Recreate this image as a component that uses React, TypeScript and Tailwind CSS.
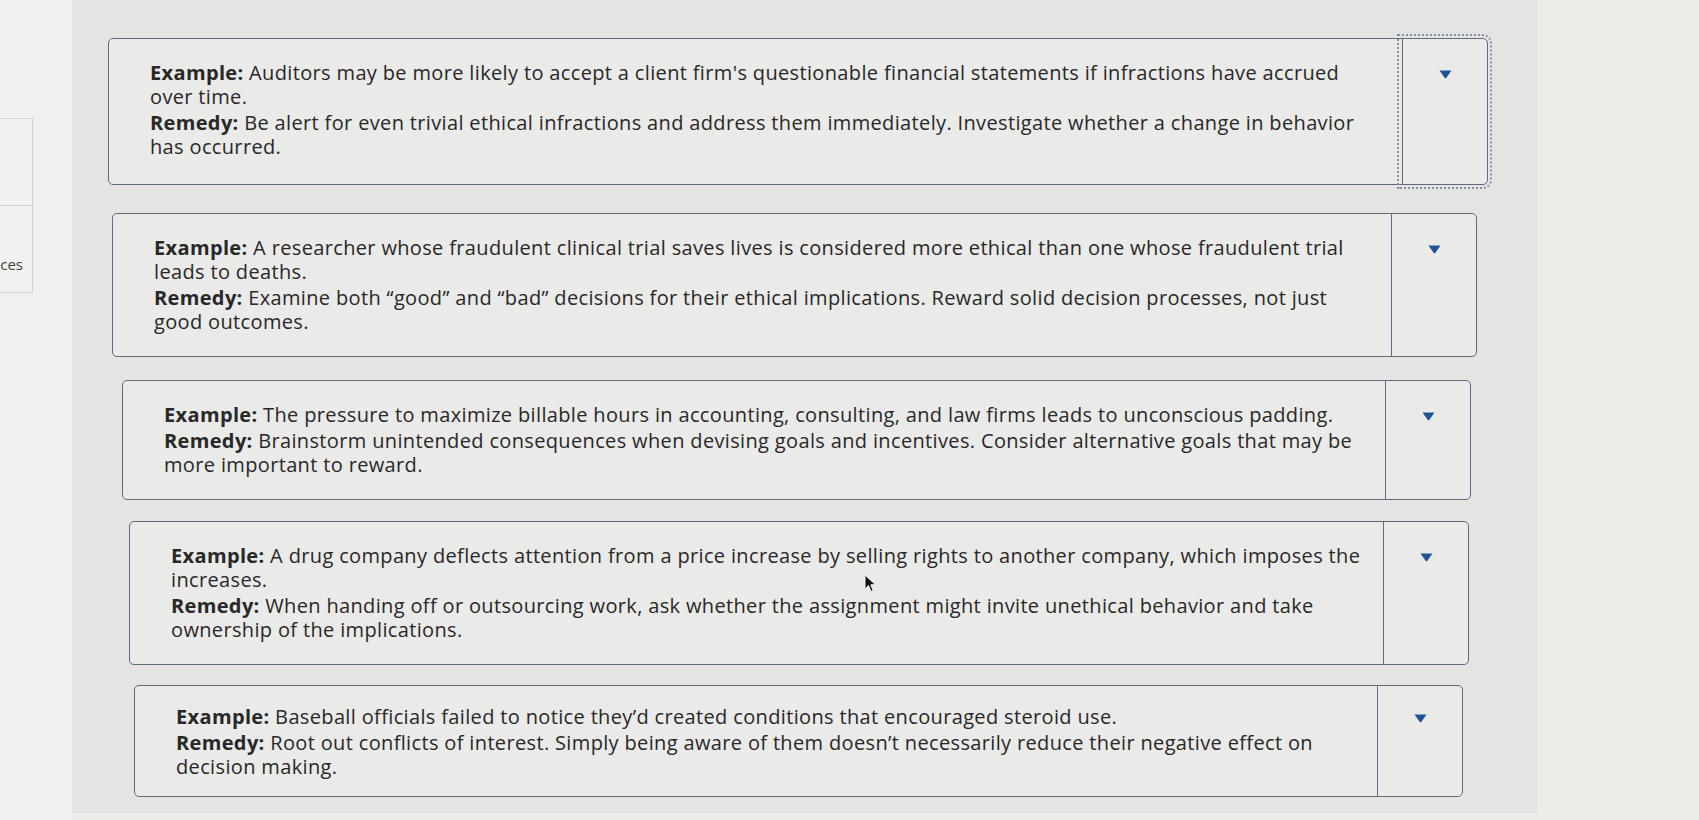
import React from "react";

type Item = {
  example: React.ReactNode[];
  remedy: React.ReactNode[];
  box: string;
  pad: string;
};

const B = ({ children }: { children: React.ReactNode }) => (
  <span className="font-bold">{children}</span>
);

const items: Item[] = [
  {
    box: "mt-[38px] ml-[36px] w-[1380px]",
    pad: "pt-[22px] pb-[25px]",
    example: [
      <>
        <B>Example:</B> Auditors may be more likely to accept a client firm's questionable financial statements if infractions have accrued
      </>,
      <>over time.</>,
    ],
    remedy: [
      <>
        <B>Remedy:</B> Be alert for even trivial ethical infractions and address them immediately. Investigate whether a change in behavior
      </>,
      <>has occurred.</>,
    ],
  },
  {
    box: "mt-[28px] ml-[40px] w-[1365px]",
    pad: "pt-[22px] pb-[22px]",
    example: [
      <>
        <B>Example:</B> A researcher whose fraudulent clinical trial saves lives is considered more ethical than one whose fraudulent trial
      </>,
      <>leads to deaths.</>,
    ],
    remedy: [
      <>
        <B>Remedy:</B> Examine both “good” and “bad” decisions for their ethical implications. Reward solid decision processes, not just
      </>,
      <>good outcomes.</>,
    ],
  },
  {
    box: "mt-[23px] ml-[50px] w-[1349px]",
    pad: "pt-[22px] pb-[22px]",
    example: [
      <>
        <B>Example:</B> The pressure to maximize billable hours in accounting, consulting, and law firms leads to unconscious padding.
      </>,
    ],
    remedy: [
      <>
        <B>Remedy:</B> Brainstorm unintended consequences when devising goals and incentives. Consider alternative goals that may be
      </>,
      <>more important to reward.</>,
    ],
  },
  {
    box: "mt-[21px] ml-[57px] w-[1340px]",
    pad: "pt-[22px] pb-[22px]",
    example: [
      <>
        <B>Example:</B> A drug company deflects attention from a price increase by selling rights to another company, which imposes the
      </>,
      <>increases.</>,
    ],
    remedy: [
      <>
        <B>Remedy:</B> When handing off or outsourcing work, ask whether the assignment might invite unethical behavior and take
      </>,
      <>ownership of the implications.</>,
    ],
  },
  {
    box: "mt-[20px] ml-[62px] w-[1329px]",
    pad: "pt-[19px] pb-[17px]",
    example: [
      <>
        <B>Example:</B> Baseball officials failed to notice they’d created conditions that encouraged steroid use.
      </>,
    ],
    remedy: [
      <>
        <B>Remedy:</B> Root out conflicts of interest. Simply being aware of them doesn’t necessarily reduce their negative effect on
      </>,
      <>decision making.</>,
    ],
  },
];

const Caret = () => (
  <svg width="13" height="9" viewBox="0 0 13 9" aria-hidden="true">
    <path d="M0.5 0.5 H12.5 L7.4 7.8 Q6.5 8.8 5.6 7.8 Z" fill="#1f5393" />
  </svg>
);

export default function App() {
  return (
    <div className="relative flex h-[820px] w-[1699px] overflow-hidden bg-[#ecece9] font-['Open_Sans',sans-serif] text-[#282828]">
      <aside className="w-[72px] shrink-0 bg-[#f0f0ee] pt-[118px]">
        <div className="w-[33px] border border-l-0 border-[#d3d3d1] bg-[#f1f1ef]">
          <div className="h-[87px] border-b border-[#d3d3d1]" />
          <div className="flex h-[86px] items-start justify-end overflow-hidden pt-[48px] pr-[9px] text-[15px] leading-[20px] text-[#3f3f3f]">
            ces
          </div>
        </div>
      </aside>

      <main className="flex h-[813px] w-[1466px] shrink-0 flex-col bg-[#e4e4e2]">
        {items.map((it, i) => (
          <div
            key={i}
            className={`${it.box} flex rounded-[5px] border-[1.5px] border-[#5f6a7d] bg-[#eaeae8]`}
          >
            <div
              className={`${it.pad} flex flex-1 flex-col gap-[2px] pl-[41px] text-[20px] leading-[24px] tracking-[0.35px] whitespace-nowrap`}
            >
              <div>
                {it.example.map((l, j) => (
                  <div key={j}>{l}</div>
                ))}
              </div>
              <div>
                {it.remedy.map((l, j) => (
                  <div key={j}>{l}</div>
                ))}
              </div>
            </div>
            <div
              className={
                i === 0
                  ? "flex w-[85px] shrink-0 justify-center rounded-r-[4px] border-l-[1.5px] border-[#5f6a7d] pt-[31px] outline-2 outline-offset-[3px] outline-dotted outline-[#8590a3]"
                  : i === 4
                  ? "flex w-[85px] shrink-0 justify-center border-l-[1.5px] border-[#5f6a7d] pt-[28px]"
                  : "flex w-[85px] shrink-0 justify-center border-l-[1.5px] border-[#5f6a7d] pt-[31px]"
              }
            >
              <div>
                <Caret />
              </div>
            </div>
          </div>
        ))}
      </main>

      <div className="flex-1 bg-[#ecece9]" />

      <svg
        className="absolute left-[864px] top-[574px]"
        width="13"
        height="19"
        viewBox="0 0 13 19"
        aria-hidden="true"
      >
        <path
          d="M1 1 L1 15 L4.5 11.5 L7 17.5 L9.2 16.6 L6.8 10.8 L11.5 10.8 Z"
          fill="#111"
          stroke="#f5f5f5"
          strokeWidth="1"
        />
      </svg>
    </div>
  );
}
